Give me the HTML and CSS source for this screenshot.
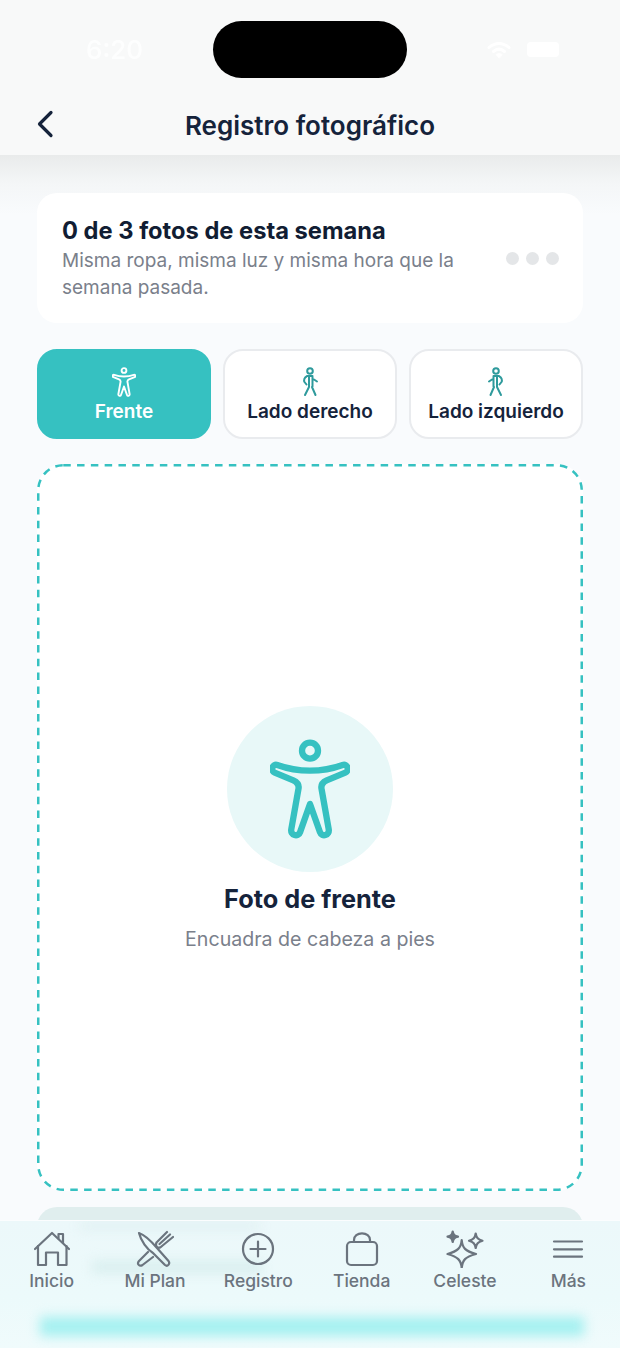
FILE: index.html
```html
<!DOCTYPE html>
<html lang="es">
<head>
  <meta charset="UTF-8">
  <meta name="viewport" content="width=device-width, initial-scale=1.0">
  <title>Registro fotográfico</title>
  <link rel="stylesheet" href="styles.css">
</head>
<body>
<div class="phone">
  <header class="topbar">
    <div class="status">
      <span class="time">6:20</span>
      <div class="island"></div>
      <div class="status-icons">
        <svg width="26" height="20" viewBox="0 0 26 20" fill="none" stroke="#fff" stroke-linecap="round">
          <path d="M3 7.500C9 2 17 2 23 7.500" stroke-width="3"/>
          <path d="M7.500 11.500C11 8.500 15 8.500 18.500 11.500" stroke-width="3"/>
          <path d="M13 18l-3-3.500c2-1.300 4-1.300 6 0z" fill="#fff" stroke-width="1"/>
        </svg>
        <div class="battery"></div>
      </div>
    </div>
    <div class="navrow">
      <svg class="back" width="18" height="28" viewBox="0 0 18 28" fill="none" stroke="#15233b" stroke-width="3.200" stroke-linecap="round" stroke-linejoin="round">
        <path d="M15 2.500L3.500 14 15 25.500"/>
      </svg>
      <h1>Registro fotográfico</h1>
    </div>
  </header>

  <main class="content">
    <section class="summary">
      <div class="summary-text">
        <h2>0 de 3 fotos de esta semana</h2>
        <p>Misma ropa, misma luz y misma hora que la semana pasada.</p>
      </div>
      <div class="dots"><span></span><span></span><span></span></div>
    </section>

    <div class="tabs">
      <button class="tab active">
        <svg width="24" height="30" viewBox="0 0 240 300" fill="none" stroke="#fff" stroke-width="19" stroke-linejoin="round">
          <circle cx="120" cy="35" r="24"/>
          <path d="M22 78C55 90 85 95 120 95C155 95 185 90 218 78C232 73 240 95 226 101L170 124C157 130 152 140 155 152L176 270C180 290 155 295 150 280L120 195L90 280C85 295 60 290 64 270L85 152C88 140 83 130 70 124L14 101C0 95 8 73 22 78Z"/>
        </svg>
        Frente
      </button>
      <button class="tab">
        <svg width="26" height="30" viewBox="0 0 26 30" fill="none" stroke="#2e9a9c" stroke-width="2" stroke-linecap="round" stroke-linejoin="round">
          <circle cx="13" cy="4" r="2.800"/>
          <path d="M9.500 9.500C7.500 10.500 6.500 13 7.500 15L9.500 17.500M12 9V20M15.500 9.500V19.500M10 9H15.500M17 12.500L20 14.500M12 20L8 28M15 20L18.500 28"/>
        </svg>
        Lado derecho
      </button>
      <button class="tab">
        <svg width="26" height="30" viewBox="0 0 26 30" fill="none" stroke="#2e9a9c" stroke-width="2" stroke-linecap="round" stroke-linejoin="round">
          <circle cx="13" cy="4" r="2.800"/>
          <path d="M16.500 9.500C18.500 10.500 19.500 13 18.500 15L16.500 17.500M14 9V20M10.500 9.500V19.500M10.500 9H16M9 12.500L6 14.500M14 20L18 28M11 20L7.500 28"/>
        </svg>
        Lado izquierdo
      </button>
    </div>

    <section class="dropzone">
      <svg class="dash" width="546" height="727" fill="none">
        <rect x="1.250" y="1.250" width="543.500" height="724.500" rx="25" stroke="#36c1c1" stroke-width="2.500" stroke-dasharray="7.500 6.300"/>
      </svg>
      <div class="figure-circle">
        <svg width="80" height="100" viewBox="0 0 240 300" fill="none" stroke="#36c1c1" stroke-width="19" stroke-linejoin="round">
          <circle cx="120" cy="35" r="24"/>
          <path d="M22 78C55 90 85 95 120 95C155 95 185 90 218 78C232 73 240 95 226 101L170 124C157 130 152 140 155 152L176 270C180 290 155 295 150 280L120 195L90 280C85 295 60 290 64 270L85 152C88 140 83 130 70 124L14 101C0 95 8 73 22 78Z"/>
        </svg>
      </div>
      <h3>Foto de frente</h3>
      <p>Encuadra de cabeza a pies</p>
    </section>

    <div class="next-card"></div>
  </main>

  <nav class="tabbar">
    <div class="blur-band blur-top"></div>
    <div class="blur-band blur-mid"></div>
    <div class="blur-band blur-bottom"></div>
    <div class="tabbar-items">
      <a class="nav-item">
        <svg width="38" height="38" viewBox="0 0 38 38" fill="none" stroke="#6b747e" stroke-width="2.200" stroke-linecap="round" stroke-linejoin="round">
          <path d="M2 19L19 3 36 19"/>
          <path d="M5 16V35H13V22.500H25V35H33.500V16"/>
          <path d="M25.500 8.500V4H30V13"/>
        </svg>
        <span>Inicio</span>
      </a>
      <a class="nav-item">
        <svg width="38" height="38" viewBox="0 0 38 38" fill="none" stroke="#6b747e" stroke-width="2.200" stroke-linecap="round" stroke-linejoin="round">
          <path d="M3 3C9 5 15 11 21 18L32.500 31C34.500 34 31.500 37 29 35L17 23C11 19.500 5 11 3 3Z"/>
          <path d="M12 22L3 31C0.500 34 3.500 37 6.500 35L17 27"/>
          <path d="M21 12L31 2M26 16L37 7M23.500 14L34 4.500M20.500 12.500C19.500 15 20 16 21 17C22 18 24 18 26 16"/>
        </svg>
        <span>Mi Plan</span>
      </a>
      <a class="nav-item">
        <svg width="38" height="38" viewBox="0 0 38 38" fill="none" stroke="#6b747e" stroke-width="2.200" stroke-linecap="round">
          <circle cx="19" cy="19" r="15"/>
          <path d="M19 11.500V26.500M11.500 19H26.500"/>
        </svg>
        <span>Registro</span>
      </a>
      <a class="nav-item">
        <svg width="38" height="38" viewBox="0 0 38 38" fill="none" stroke="#6b747e" stroke-width="2.200" stroke-linecap="round" stroke-linejoin="round">
          <rect x="4" y="12" width="30" height="23" rx="4"/>
          <path d="M11 12V10C11 6 14.500 3.300 19 3.300S27 6 27 10V12"/>
        </svg>
        <span>Tienda</span>
      </a>
      <a class="nav-item">
        <svg width="40" height="38" viewBox="0 0 40 38" stroke="#6b747e" stroke-width="2.200" stroke-linejoin="round" fill="none">
          <path d="M16.700 10C17.500 18 20 21 31 24C20 27 17.500 30 16.700 38C16 30 13 27 2.500 24C13 21 16 18 16.700 10Z"/>
          <path d="M7.700 1.500C8.300 5 9.500 6 13 6.700C9.500 7.500 8.300 8.500 7.700 12C7 8.500 6 7.500 2.500 6.700C6 6 7 5 7.700 1.500Z" fill="#6b747e"/>
          <path d="M30.700 3.500C31.400 8 33 9.500 37.500 10.700C33 12 31.400 13.500 30.700 18C30 13.500 28.500 12 24 10.700C28.500 9.500 30 8 30.700 3.500Z"/>
        </svg>
        <span>Celeste</span>
      </a>
      <a class="nav-item">
        <svg width="38" height="38" viewBox="0 0 38 38" fill="none" stroke="#6b747e" stroke-width="2.200" stroke-linecap="round">
          <path d="M5 11.500H33M5 19.300H33M5 26.700H33"/>
        </svg>
        <span>Más</span>
      </a>
    </div>
  </nav>
</div>
</body>
</html>
```

FILE: styles.css
```css
* {
  box-sizing: border-box;
}

body {
  margin: 0;
  font-family: Inter, "Liberation Sans", sans-serif;
  background-color: #f9fbfd;
}

.phone {
  position: relative;
  width: 620px;
  height: 1348px;
  overflow: hidden;
}

.topbar {
  height: 155px;
  background-color: #f8f9f9;
}

.status {
  display: flex;
  justify-content: space-between;
  align-items: center;
  height: 78px;
  padding: 21px 61px 0 86px;
}

.time {
  width: 62px;
  font-size: 26px;
  font-weight: 500;
  color: #fff;
  opacity: 0.85;
}

.island {
  width: 194px;
  height: 57px;
  background-color: #000;
  border-radius: 29px;
  margin-right: 14px;
}

.status-icons {
  display: flex;
  align-items: center;
  gap: 15px;
}

.battery {
  width: 32px;
  height: 15px;
  background-color: #fff;
  border-radius: 4px;
}

.navrow {
  position: relative;
  display: flex;
  justify-content: center;
  align-items: center;
  height: 62px;
  padding-top: 33px;
}

.back {
  position: absolute;
  left: 36px;
  top: 32px;
}

h1 {
  margin: 0;
  font-size: 26px;
  font-weight: 600;
  color: #15233b;
}

.content {
  padding: 38px 37px 0;
  background: linear-gradient(#e9ebeb, #f4f6f7 28px, #f9fbfd 60px);
}

.summary {
  display: flex;
  align-items: center;
  justify-content: space-between;
  height: 130px;
  padding: 0 24px 0 25px;
  background-color: #fff;
  border-radius: 20px;
}

.summary-text {
  width: 420px;
}

h2 {
  margin: 0 0 1px;
  font-size: 23.700px;
  font-weight: 700;
  line-height: 30px;
  color: #111d33;
}

.summary p {
  margin: 0;
  font-size: 19px;
  line-height: 27px;
  color: #7a808b;
}

.dots {
  display: flex;
  gap: 7px;
}

.dots span {
  width: 13px;
  height: 13px;
  border-radius: 50%;
  background-color: #e4e6e8;
}

.tabs {
  display: grid;
  grid-template-columns: repeat(3, 174px);
  gap: 12px;
  margin-top: 26px;
}

.tab {
  display: flex;
  flex-direction: column;
  align-items: center;
  justify-content: center;
  gap: 3px;
  height: 90px;
  padding: 1px 0 0;
  background-color: #fff;
  border: 2px solid #e9ebee;
  border-radius: 20px;
  font-family: inherit;
  font-size: 19px;
  font-weight: 600;
  color: #15233b;
}

.tab.active {
  background-color: #36c1c1;
  border-color: #36c1c1;
  color: #fff;
}

.dropzone {
  position: relative;
  display: flex;
  flex-direction: column;
  align-items: center;
  height: 727px;
  margin-top: 25px;
  padding-top: 242px;
  background-color: #fff;
  border-radius: 26px;
}

.dash {
  position: absolute;
  left: 0;
  top: 0;
}

.figure-circle {
  display: flex;
  justify-content: center;
  align-items: center;
  width: 166px;
  height: 166px;
  background-color: #e8f8f8;
  border-radius: 50%;
}

h3 {
  margin: 12px 0 0;
  font-size: 25.300px;
  font-weight: 700;
  line-height: 30px;
  color: #15233b;
}

.dropzone p {
  margin: 13px 0 0;
  font-size: 19.600px;
  line-height: 24px;
  color: #7a808b;
}

.next-card {
  height: 60px;
  margin-top: 16px;
  background-color: #e0eeee;
  border-radius: 20px;
}

.tabbar {
  position: absolute;
  left: 0;
  right: 0;
  bottom: 0;
  height: 128px;
  overflow: hidden;
  background: linear-gradient(#ecf8fa, #ecfafb 60%, #f0fbfc);
  border-top: 1px solid #fbfdfe;
}

.blur-band {
  position: absolute;
  filter: blur(6px);
}

.blur-top {
  left: 80px;
  top: 2px;
  width: 180px;
  height: 6px;
  background-color: #dceef0;
}

.blur-mid {
  left: 92px;
  top: 40px;
  width: 170px;
  height: 12px;
  background-color: #d8eeee;
}

.blur-bottom {
  left: 40px;
  top: 96px;
  width: 544px;
  height: 19px;
  background-color: #a4f0f0;
}

.tabbar-items {
  position: relative;
  display: grid;
  grid-template-columns: repeat(6, 1fr);
  padding-top: 9px;
}

.nav-item {
  display: flex;
  flex-direction: column;
  align-items: center;
  gap: 3px;
  font-size: 17.500px;
  font-weight: 500;
  line-height: 20px;
  color: #6b747e;
}
```
